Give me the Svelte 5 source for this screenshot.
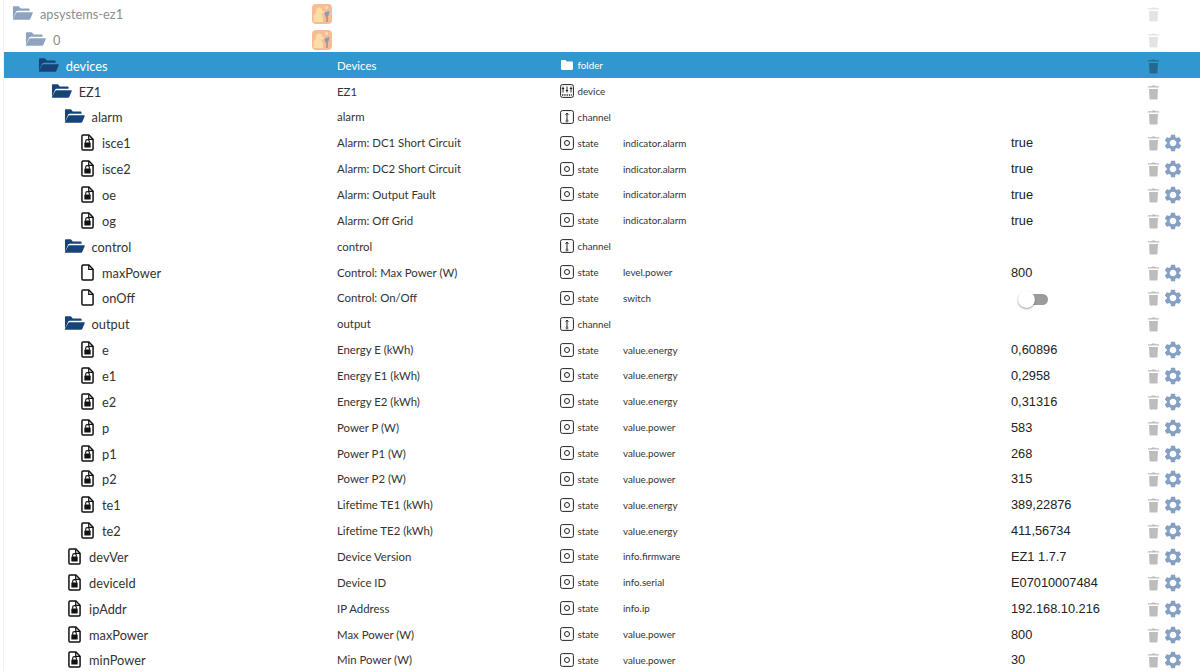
<script>
  const rows = [
    { n: 'apsystems-ez1', d: 0, icon: 'folder', dim: true, logo: true },
    { n: '0', d: 1, icon: 'folder', dim: true, logo: true },
    { n: 'devices', d: 2, icon: 'folder', title: 'Devices', type: 'folder', sel: true },
    { n: 'EZ1', d: 3, icon: 'folder', title: 'EZ1', type: 'device' },
    { n: 'alarm', d: 4, icon: 'folder', title: 'alarm', type: 'channel' },
    { n: 'isce1', d: 5, icon: 'lock', title: 'Alarm: DC1 Short Circuit', type: 'state', role: 'indicator.alarm', v: 'true' },
    { n: 'isce2', d: 5, icon: 'lock', title: 'Alarm: DC2 Short Circuit', type: 'state', role: 'indicator.alarm', v: 'true' },
    { n: 'oe', d: 5, icon: 'lock', title: 'Alarm: Output Fault', type: 'state', role: 'indicator.alarm', v: 'true' },
    { n: 'og', d: 5, icon: 'lock', title: 'Alarm: Off Grid', type: 'state', role: 'indicator.alarm', v: 'true' },
    { n: 'control', d: 4, icon: 'folder', title: 'control', type: 'channel' },
    { n: 'maxPower', d: 5, icon: 'file', title: 'Control: Max Power (W)', type: 'state', role: 'level.power', v: '800' },
    { n: 'onOff', d: 5, icon: 'file', title: 'Control: On/Off', type: 'state', role: 'switch', toggle: true },
    { n: 'output', d: 4, icon: 'folder', title: 'output', type: 'channel' },
    { n: 'e', d: 5, icon: 'lock', title: 'Energy E (kWh)', type: 'state', role: 'value.energy', v: '0,60896' },
    { n: 'e1', d: 5, icon: 'lock', title: 'Energy E1 (kWh)', type: 'state', role: 'value.energy', v: '0,2958' },
    { n: 'e2', d: 5, icon: 'lock', title: 'Energy E2 (kWh)', type: 'state', role: 'value.energy', v: '0,31316' },
    { n: 'p', d: 5, icon: 'lock', title: 'Power P (W)', type: 'state', role: 'value.power', v: '583' },
    { n: 'p1', d: 5, icon: 'lock', title: 'Power P1 (W)', type: 'state', role: 'value.power', v: '268' },
    { n: 'p2', d: 5, icon: 'lock', title: 'Power P2 (W)', type: 'state', role: 'value.power', v: '315' },
    { n: 'te1', d: 5, icon: 'lock', title: 'Lifetime TE1 (kWh)', type: 'state', role: 'value.energy', v: '389,22876' },
    { n: 'te2', d: 5, icon: 'lock', title: 'Lifetime TE2 (kWh)', type: 'state', role: 'value.energy', v: '411,56734' },
    { n: 'devVer', d: 4, icon: 'lock', title: 'Device Version', type: 'state', role: 'info.firmware', v: 'EZ1 1.7.7' },
    { n: 'deviceId', d: 4, icon: 'lock', title: 'Device ID', type: 'state', role: 'info.serial', v: 'E07010007484' },
    { n: 'ipAddr', d: 4, icon: 'lock', title: 'IP Address', type: 'state', role: 'info.ip', v: '192.168.10.216' },
    { n: 'maxPower', d: 4, icon: 'lock', title: 'Max Power (W)', type: 'state', role: 'value.power', v: '800' },
    { n: 'minPower', d: 4, icon: 'lock', title: 'Min Power (W)', type: 'state', role: 'value.power', v: '30' }
  ];
</script>

<main class="tree">
  {#each rows as r}
    <div class="row" class:sel={r.sel} class:dim={r.dim}>
      <div class="name" style="padding-left:{r.d * 12.9 + (r.icon === 'folder' ? 8 : 12.5)}px">
        {#if r.icon === 'folder'}
          <svg class="folder" viewBox="0 0 22 16"><path d="M1 14.2V2.2C1 1.5 1.5 1 2.2 1h5l2 2.2h8.2c.6 0 1 .4 1 1V5.6H6.2c-.9 0-1.5.4-1.9 1.2Z"/><path d="M5.6 7.2h15.4c.6 0 .9.5.7 1l-2.6 6c-.2.5-.6.8-1.2.8H1.6c-.5 0-.8-.4-.6-.8l3.4-6.2c.3-.5.7-.8 1.2-.8Z"/></svg>
        {:else}
          <svg class="file" viewBox="0 0 14 18">
            <path d="M1 2.2C1 1.5 1.5 1 2.2 1h6.3L13 5.5v10.3c0 .7-.5 1.2-1.2 1.2H2.2c-.7 0-1.2-.5-1.2-1.2Z" fill="none" stroke="#111" stroke-width="1.600"/>
            <path d="M8.300 1.200v4.500h4.600" fill="none" stroke="#111" stroke-width="1.300"/>
            {#if r.icon === 'lock'}
              <rect x="3.600" y="9" width="6.800" height="5.400" rx=".6" fill="#111"/>
              <path d="M5 9.200V7.900a2 2 0 0 1 4 0v1.300" fill="none" stroke="#111" stroke-width="1.200"/>
            {/if}
          </svg>
        {/if}
        <span>{r.n}</span>
      </div>
      <div class="title">
        {#if r.logo}
          <svg class="logo" viewBox="0 0 20 20">
            <rect width="20" height="20" rx="4" fill="#f7bb95"/>
            <circle cx="14.500" cy="3.500" r="1.800" fill="#fbd6a8"/>
            <path d="M1.500 18v-5c0-2 1-3 2.500-4V6.500c0-2 2-3.500 4-3 1.500.4 2 1.500 2 3l2.500 1.500-1 1.500-2-.3c0 2 1.500 3.300 1.500 5.300V18Z" fill="#f9dea6"/>
            <path d="M12.500 8.500 17.500 7l-1.200 5-3 .6Z" fill="#7f9dc0"/>
            <path d="M15 12v6" stroke="#6b7f99" stroke-width="1"/>
          </svg>
        {:else}{r.title}{/if}
      </div>
      <div class="type">
        {#if r.type === 'folder'}
          <svg class="ty" viewBox="0 0 14 14"><path d="M1 3.200C1 2.500 1.500 2 2.200 2h3.300l1.300 1.400h5c.7 0 1.200.5 1.200 1.200v6.200c0 .7-.5 1.200-1.200 1.200H2.200C1.500 12 1 11.500 1 10.800Z" fill="#fff"/></svg>
        {:else if r.type}
          <svg class="ty" viewBox="0 0 14 14">
            <rect x=".6" y=".6" width="12.800" height="12.800" rx="1.800" fill="none" stroke="#222" stroke-width="1"/>
            {#if r.type === 'state'}
              <circle cx="7" cy="7" r="2.500" fill="none" stroke="#222" stroke-width="1"/>
            {:else if r.type === 'channel'}
              <path d="M7 4v6M5.600 4.800 7 3l1.400 1.800" fill="none" stroke="#222" stroke-width="1"/><circle cx="7" cy="11" r="1" fill="none" stroke="#222" stroke-width=".8"/>
            {:else}
              <path d="M3 2.500v6M7 2.500v6M11 2.500v6M1.800 4.500h2.400M5.800 6.500h2.400M9.800 4.500h2.400" fill="none" stroke="#222" stroke-width="1"/><path d="M2 11h10" stroke="#222" stroke-width="1.600" stroke-dasharray="1.300 1"/>
            {/if}
          </svg>
        {/if}
        {#if r.type}<span>{r.type}</span>{/if}
      </div>
      <div class="role">{r.role ?? ''}</div>
      <div class="value">
        {#if r.toggle}
          <span class="switch"><span class="knob"></span></span>
        {:else}{r.v ?? ''}{/if}
      </div>
      <div class="actions">
        <svg class="trash" viewBox="0 0 14 18"><path d="M2 5.500h10l-.5 10.800c0 .7-.5 1.200-1.200 1.200H3.700c-.7 0-1.200-.5-1.200-1.200Z"/><path d="M.7 2.600h3.800l.7-.9h3.600l.7.9h3.800v1.300H.7Z"/></svg>
        {#if r.type === 'state'}
          <svg class="gear" viewBox="0 0 24 24"><path fill-rule="evenodd" d="M19.430 12.980c.04-.32.07-.64.07-.98s-.03-.66-.07-.98l2.110-1.650c.19-.15.24-.42.12-.64l-2-3.460c-.12-.22-.39-.3-.61-.22l-2.490 1c-.52-.4-1.080-.73-1.690-.98l-.38-2.650C14.460 2.180 14.250 2 14 2h-4c-.25 0-.46.18-.49.420l-.38 2.650c-.61.25-1.170.59-1.690.98l-2.490-1c-.23-.09-.49 0-.61.220l-2 3.460c-.13.220-.07.490.12.640l2.110 1.650c-.04.320-.07.650-.07.980s.03.660.07.980l-2.110 1.650c-.19.150-.24.420-.12.640l2 3.460c.12.220.39.300.61.220l2.490-1c.52.400 1.080.730 1.690.980l.38 2.650c.03.240.24.420.49.420h4c.25 0 .46-.18.49-.42l.38-2.650c.61-.25 1.170-.59 1.690-.98l2.490 1c.23.090.49 0 .61-.22l2-3.460c.12-.22.070-.49-.12-.64ZM12 16c-2.200 0-4-1.800-4-4s1.800-4 4-4 4 1.800 4 4-1.800 4-4 4Z"/></svg>
        {/if}
      </div>
    </div>
  {/each}
</main>

<style>
  :global(body) { margin: 0; background: #fff; overflow: hidden; }
  .tree {
    height: 671px; overflow: hidden; box-sizing: border-box;
    margin-left: 3px; border-left: 1px solid #f2f2f2;
    font-family: Lato, sans-serif; color: #222;
  }
  .row {
    display: grid; grid-template-columns: 333px 222.500px 63.500px 388px 136px 1fr;
    height: 25.860px; align-items: center; font-size: 11.400px; white-space: nowrap;
  }
  .row.sel { background: #3098cf; color: #fff; }
  .name { display: flex; align-items: center; gap: 7px; font-size: 12.800px; color: #333; }
  .name span { padding-top: 2px; }
  .sel .name { color: #fff; }
  .dim .name { color: #8d8d8d; }
  .folder { width: 21px; height: 16px; fill: #164477; flex: none; }
  .dim .folder { fill: #8ea3bf; }
  .file { width: 13px; height: 17px; flex: none; margin: 1px 1px 0 0; }
  .logo { width: 20px; height: 20px; display: block; margin-top: 1px; margin-left: -25px; }
  .title { color: #333; padding-top: 1px; }
  .sel .title { color: #fff; }
  .type { display: flex; align-items: center; gap: 4px; font-size: 9.800px; color: #333; padding-top: 1px; }
  .sel .type { color: #fff; }
  .ty { width: 14px; height: 14px; flex: none; }
  .role { font-size: 9.800px; color: #333; padding-top: 1px; }
  .value { font-family: "Liberation Sans", sans-serif; font-size: 12.800px; color: #222; padding-top: 1px; }
  .actions { display: flex; align-items: center; gap: 2.800px; padding-top: 2px; }
  .trash { width: 13px; height: 16px; fill: #bdbdbd; flex: none; }
  .dim .trash { fill: #e3e3e3; }
  .sel .trash { fill: #26688f; }
  .gear { width: 20px; height: 20px; fill: #85a0c2; flex: none; }
  .switch { display: block; position: relative; width: 25px; height: 11px; margin: 4px 0 0 12px; background: #9b9b9b; border-radius: 6px; }
  .knob { position: absolute; left: -5px; top: -3px; width: 17px; height: 17px; border-radius: 50%; background: #fff; box-shadow: 0 1px 2px rgba(0,0,0,.4); }
</style>
